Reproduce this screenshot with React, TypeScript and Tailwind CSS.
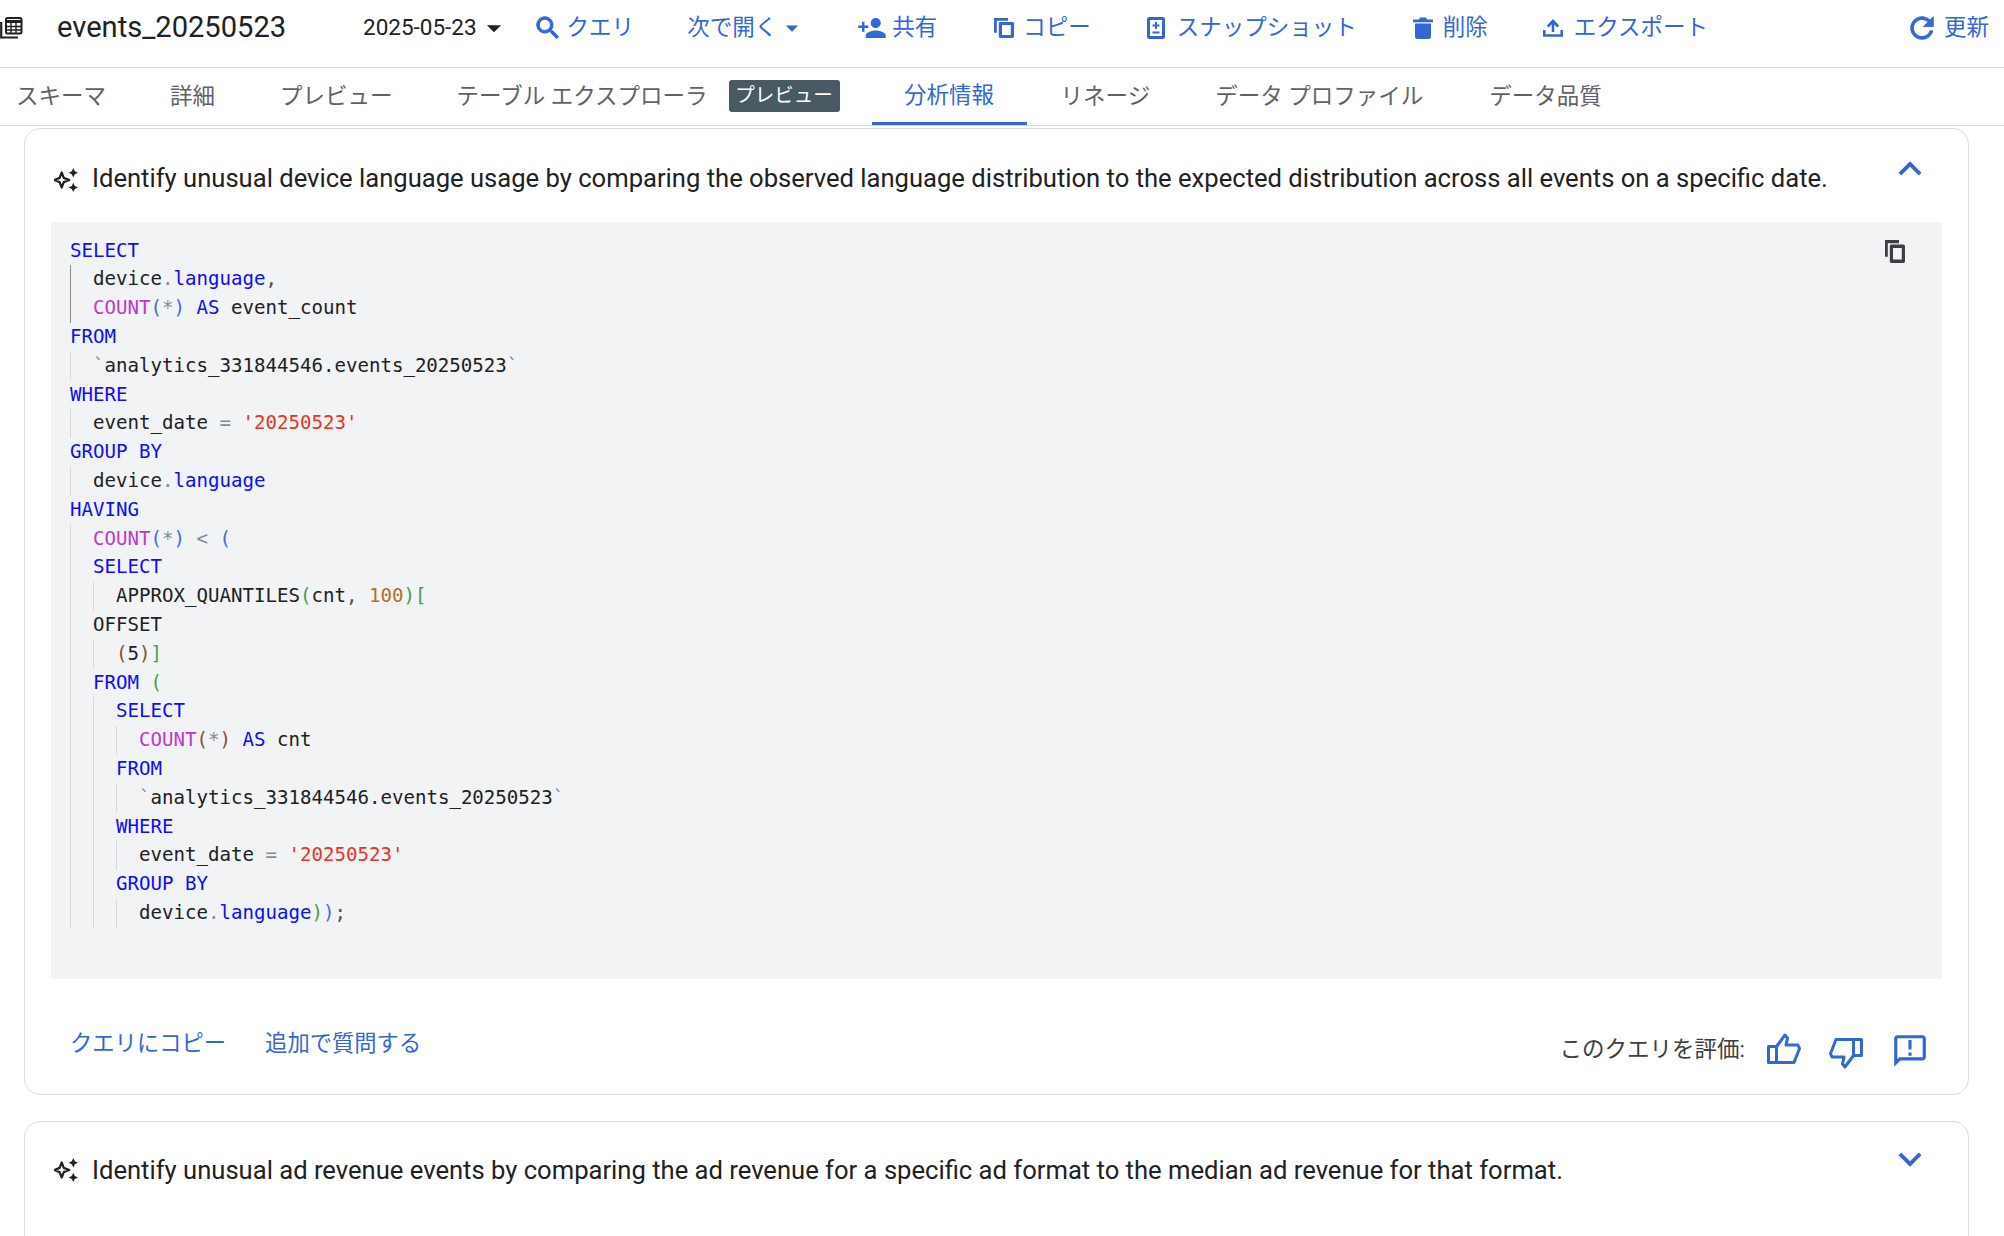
import React from 'react';
import {
  MdPersonAdd,
  MdArrowDropDown,
  MdOutlineAnnouncement,
  MdKeyboardArrowUp,
  MdKeyboardArrowDown,
} from 'react-icons/md';

const FONT = "font-['Roboto','Noto_Sans_CJK_JP',sans-serif]";

type Tok = [string, string?];

const KW = 'text-[#0d0dff]';
const FN = 'text-[#b93cc9]';
const STR = 'text-[#ea3323]';
const NUM = 'text-[#b0702c]';
const OP = 'text-[#7f8c99]';
const PUNCT = 'text-[#4a4f55]';
const P1 = 'text-[#3b6fe0]';
const P2 = 'text-[#4c9a4c]';
const P3 = 'text-[#85502a]';

// indent level, tokens
const LINES: [number, Tok[]][] = [
  [0, [['SELECT', KW]]],
  [1, [['device'], ['.', OP], ['language', KW], [',', PUNCT]]],
  [1, [['COUNT', FN], ['(', P1], ['*', OP], [')', P1], [' '], ['AS', KW], [' event_count']]],
  [0, [['FROM', KW]]],
  [1, [['`', OP], ['analytics_331844546.events_20250523'], ['`', OP]]],
  [0, [['WHERE', KW]]],
  [1, [['event_date '], ['=', OP], [' '], ["'20250523'", STR]]],
  [0, [['GROUP BY', KW]]],
  [1, [['device'], ['.', OP], ['language', KW]]],
  [0, [['HAVING', KW]]],
  [1, [['COUNT', FN], ['(', P1], ['*', OP], [')', P1], [' '], ['<', OP], [' '], ['(', P1]]],
  [1, [['SELECT', KW]]],
  [2, [['APPROX_QUANTILES'], ['(', P2], ['cnt'], [',', PUNCT], [' '], ['100', NUM], [')', P2], ['[', P2]]],
  [1, [['OFFSET']]],
  [2, [['(', P3], ['5'], [')', P3], [']', P2]]],
  [1, [['FROM', KW], [' '], ['(', P2]]],
  [2, [['SELECT', KW]]],
  [3, [['COUNT', FN], ['(', P3], ['*', OP], [')', P3], [' '], ['AS', KW], [' cnt']]],
  [2, [['FROM', KW]]],
  [3, [['`', OP], ['analytics_331844546.events_20250523'], ['`', OP]]],
  [2, [['WHERE', KW]]],
  [3, [['event_date '], ['=', OP], [' '], ["'20250523'", STR]]],
  [2, [['GROUP BY', KW]]],
  [3, [['device'], ['.', OP], ['language', KW], [')', P2], [')', P1], [';', PUNCT]]],
];

function Sparkle() {
  return (
    <svg width="24" height="24" viewBox="0 0 24 24" className="shrink-0 text-[#202124]">
      <path d="M7.7 4.5 L9.8 9.9 L15.2 12 L9.8 14.1 L7.7 19.5 L5.6 14.1 L0.2 12 L5.6 9.9 Z" fill="none" stroke="currentColor" strokeWidth="2.2" strokeLinejoin="round" />
      <path d="M19.3 0 L20.8 3.2 L24 4.7 L20.8 6.2 L19.3 9.4 L17.8 6.2 L14.6 4.7 L17.8 3.2 Z" fill="currentColor" />
      <path d="M19.3 14.8 L20.8 18 L24 19.5 L20.8 21 L19.3 24 L17.8 21 L14.6 19.5 L17.8 18 Z" fill="currentColor" />
    </svg>
  );
}

function TableIcon() {
  return (
    <svg width="23" height="22" viewBox="0 0 23 22" className="shrink-0 text-[#202124]">
      <rect x="6" y="1" width="15.5" height="15.5" rx="1.5" fill="none" stroke="currentColor" strokeWidth="2" />
      <path d="M6 3 H21.5 V6 H6 Z" fill="currentColor" />
      <path d="M6 9.5 H21.5 M6 13 H21.5 M11 6 V16 M16 6 V16" stroke="currentColor" strokeWidth="1.4" />
      <path d="M1.2 5 V20.5 H18" fill="none" stroke="currentColor" strokeWidth="2.2" />
    </svg>
  );
}

function SearchIcon() {
  return (
    <svg width="30" height="30" viewBox="0 0 24 24" className="ml-[22px] shrink-0 text-[#3367d6]">
      <path
        d="M15.5 14h-.79l-.28-.27C15.41 12.59 16 11.11 16 9.5 16 5.91 13.09 3 9.5 3S3 5.91 3 9.5 5.91 16 9.5 16c1.61 0 3.09-.59 4.23-1.57l.27.28v.79l5 4.99L20.49 19l-4.99-5zm-6 0C7.01 14 5 11.99 5 9.5S7.01 5 9.5 5 14 7.01 14 9.5 11.99 14 9.5 14z"
        fill="currentColor"
        stroke="currentColor"
        strokeWidth="0.8"
      />
    </svg>
  );
}

function RefreshIcon() {
  return (
    <svg width="34" height="34" viewBox="0 0 24 24" className="ml-[197px] shrink-0 text-[#3367d6]">
      <path
        d="M17.65 6.35C16.2 4.9 14.21 4 12 4c-4.42 0-7.99 3.58-7.99 8s3.57 8 7.99 8c3.73 0 6.84-2.55 7.73-6h-2.08c-.82 2.33-3.04 4-5.65 4-3.31 0-6-2.69-6-6s2.69-6 6-6c1.66 0 3.14.69 4.22 1.78L13 11h7V4l-2.35 2.35z"
        fill="currentColor"
        stroke="currentColor"
        strokeWidth="0.6"
      />
    </svg>
  );
}

function SnapshotIcon() {
  return (
    <svg width="18" height="22" viewBox="0 0 18 22" className="shrink-0 text-[#3367d6]">
      <rect x="1.5" y="1.5" width="15" height="19" rx="1" fill="none" stroke="currentColor" strokeWidth="3" />
      <path d="M9 5 V12 M5.5 8.5 H12.5 M5.5 15.5 H12.5" stroke="currentColor" strokeWidth="2" />
    </svg>
  );
}

function CopyIcon({ className, h }: { className: string; h: number }) {
  return (
    <svg width="20" height={h} viewBox="0 0 20 20.5" preserveAspectRatio="none" className={className}>
      <path d="M0 0 H14 V2.8 H2.8 V15 H0 Z" fill="currentColor" />
      <path
        fillRule="evenodd"
        d="M6 4 H18.5 A1.5 1.5 0 0 1 20 5.5 V19 A1.5 1.5 0 0 1 18.5 20.5 H6 A1.5 1.5 0 0 1 4.8 19 V5.5 A1.5 1.5 0 0 1 6 4 Z M8 7.2 V17.4 H16.8 V7.2 Z"
        fill="currentColor"
      />
    </svg>
  );
}

function TrashIcon() {
  return (
    <svg width="20" height="22" viewBox="0 0 20 22" className="shrink-0 text-[#3367d6]">
      <path d="M0 2.5 H6 L7 0.5 H13 L14 2.5 H20 V5.2 H0 Z" fill="currentColor" />
      <path d="M2 6.5 H18 V19.5 A2.5 2.5 0 0 1 15.5 22 H4.5 A2.5 2.5 0 0 1 2 19.5 Z" fill="currentColor" />
    </svg>
  );
}

function UploadIcon() {
  return (
    <svg width="20" height="18" viewBox="0 0 20 18" className="shrink-0 text-[#3367d6]">
      <path d="M10 13 V2.5 M4.8 7.5 L10 2 L15.2 7.5" fill="none" stroke="currentColor" strokeWidth="2.6" />
      <path d="M1.3 11 V16.5 H18.7 V11" fill="none" stroke="currentColor" strokeWidth="2.6" />
    </svg>
  );
}

function Thumb({ down }: { down?: boolean }) {
  return (
    <svg width="34" height="31" viewBox="0 0 34 31" className={down ? 'rotate-180 text-[#3367d6]' : 'text-[#3367d6]'}>
      <path
        d="M1.5 13.5 H9.5 L18 2 L20.5 5 L19 12 H31 L32.5 15.5 L27 29.5 H1.5 Z M9.5 13.5 V29.5"
        fill="none"
        stroke="currentColor"
        strokeWidth="3"
        strokeLinejoin="round"
      />
    </svg>
  );
}

function ActionText({ children, className }: { children: React.ReactNode; className?: string }) {
  return <span className={'text-[22.5px] leading-none text-[#3367d6] ' + (className ?? '')}>{children}</span>;
}

function Header() {
  return (
    <div className="flex h-[68px] items-center border-b border-[#dadce0] pb-[12px]">
      <TableIcon />
      <span className="ml-[34px] w-[306px] text-[29.1px] leading-none text-[#202124]">events_20250523</span>
      <span className="text-[22.5px] leading-none text-[#202124]">2025-05-23</span>
      <MdArrowDropDown size={34} className="text-[#202124]" />
      <SearchIcon />
      <ActionText className="ml-[4px]">クエリ</ActionText>
      <ActionText className="ml-[53px]">次で開く</ActionText>
      <MdArrowDropDown size={30} className="text-[#3367d6]" />
      <MdPersonAdd size={30} className="ml-[50px] text-[#3367d6]" />
      <ActionText className="ml-[5px]">共有</ActionText>
      <CopyIcon h={20} className="ml-[57px] shrink-0 text-[#3367d6]" />
      <ActionText className="ml-[9px]">コピー</ActionText>
      <span className="ml-[56px] flex items-center">
        <SnapshotIcon />
      </span>
      <ActionText className="ml-[12px]">スナップショット</ActionText>
      <span className="ml-[56px] flex items-center">
        <TrashIcon />
      </span>
      <ActionText className="ml-[10px]">削除</ActionText>
      <span className="ml-[55px] flex items-center">
        <UploadIcon />
      </span>
      <ActionText className="ml-[11px]">エクスポート</ActionText>
      <RefreshIcon />
      <ActionText className="ml-[5px]">更新</ActionText>
    </div>
  );
}

function Tabs() {
  return (
    <div className="flex h-[58px] border-b border-[#dadce0] pl-[16px] text-[22.5px] leading-none text-[#5f6368]">
      <span className="flex items-center pb-[1px]">スキーマ</span>
      <span className="ml-[64px] flex items-center pb-[1px]">詳細</span>
      <span className="ml-[65px] flex items-center pb-[1px]">プレビュー</span>
      <span className="ml-[64px] flex items-center pb-[1px]">テーブル エクスプローラ</span>
      <span className="ml-[21px] mr-[32px] flex items-center pb-[2px]">
        <span className="flex h-[32px] w-[111px] items-center justify-center rounded-[3px] bg-[#4a5a64] text-[19.5px] text-white">プレビュー</span>
      </span>
      <span className="flex h-[57px] w-[155px] items-center justify-center border-b-[3px] border-[#3367d6] text-[#3367d6]">分析情報</span>
      <span className="ml-[34px] flex items-center pb-[1px]">リネージ</span>
      <span className="ml-[65px] flex items-center pb-[1px]">データ プロファイル</span>
      <span className="ml-[66px] flex items-center pb-[1px]">データ品質</span>
    </div>
  );
}

function CodeBlock() {
  return (
    <div className="relative mx-[26px] h-[757px] bg-[#f1f3f4] pl-[19px] pt-[14.5px] font-['DejaVu_Sans_Mono',monospace] text-[19.1px] text-[#202124]">
      <CopyIcon h={23} className="absolute right-[37px] top-[18px] text-[#3c4043]" />
      {LINES.map(([indent, toks], i) => (
        <div key={i} className="flex h-[28.8px] items-center whitespace-pre">
          {Array.from({ length: indent }).map((_, g) => (
            <span
              key={g}
              className={
                'h-full w-[23px] shrink-0 border-l-[1.5px] ' +
                (g === 0 && (i === 1 || i === 2) ? 'border-[#8a8a8a]' : 'border-[#d6d8da]')
              }
            />
          ))}
          <span>
            {toks.map(([text, color], j) => (
              <span key={j} className={color}>{text}</span>
            ))}
          </span>
        </div>
      ))}
    </div>
  );
}

function Question({ text, open }: { text: string; open?: boolean }) {
  return (
    <div className={'relative flex h-[93px] items-start pl-[29px] ' + (open ? 'pt-[35px]' : 'pt-[34px]')}>
      <span className={open ? 'mt-[4px]' : 'mt-[2px]'}><Sparkle /></span>
      <span className="ml-[14px] text-[25.6px] leading-[28px] text-[#202124]">{text}</span>
      {open ? (
        <MdKeyboardArrowUp size={46} className="absolute right-[35px] top-[17px] text-[#3367d6]" />
      ) : (
        <MdKeyboardArrowDown size={46} className="absolute right-[35px] top-[14px] text-[#3367d6]" />
      )}
    </div>
  );
}

export default function App() {
  return (
    <div className={`h-[1236px] w-[2004px] overflow-hidden bg-white ${FONT}`}>
      <Header />
      <Tabs />
      <div className="px-[24px] pt-[2px]">
        <div className="h-[967px] w-[1945px] rounded-[16px] border border-[#dadce0]">
          <Question
            open
            text="Identify unusual device language usage by comparing the observed language distribution to the expected distribution across all events on a specific date."
          />
          <CodeBlock />
          <div className="flex items-start justify-between pl-[45px] pr-[39px] pt-[51px]">
            <div className="flex gap-[39px] text-[22.3px] leading-[26px] text-[#3367d6]">
              <span>クエリにコピー</span>
              <span>追加で質問する</span>
            </div>
            <div className="mt-[-4px] flex items-center">
              <span className="mr-[22px] mt-[3px] text-[22.5px] leading-none text-[#3c4043]">このクエリを評価:</span>
              <Thumb />
              <span className="ml-[28px] mt-[10px]"><Thumb down /></span>
              <MdOutlineAnnouncement size={38} className="ml-[28px] mt-[6px] text-[#3367d6]" />
            </div>
          </div>
        </div>
        <div className="mt-[26px] h-[200px] w-[1945px] rounded-[16px] border border-[#dadce0]">
          <Question text="Identify unusual ad revenue events by comparing the ad revenue for a specific ad format to the median ad revenue for that format." />
        </div>
      </div>
    </div>
  );
}
